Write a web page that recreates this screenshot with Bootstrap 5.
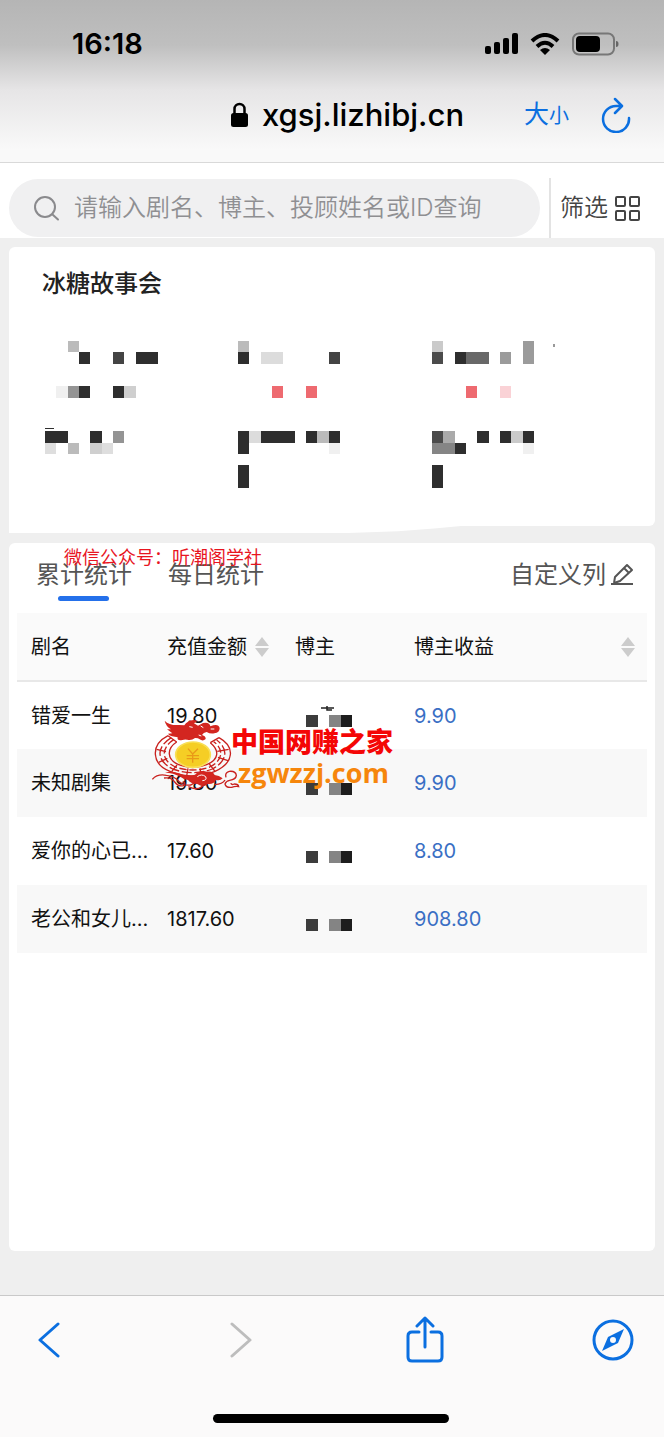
<!DOCTYPE html>
<html lang="zh-CN">
<head>
<meta charset="utf-8">
<meta name="viewport" content="width=device-width, initial-scale=1">
<title>冰糖故事会</title>
<link href="https://cdn.jsdelivr.net/npm/bootstrap@5.3.0/dist/css/bootstrap.min.css" rel="stylesheet">
<style>
  body { font-family: Inter, "Noto Sans CJK SC", sans-serif; background: #efefef; color: #111; }
  svg { display: block; flex: none; }
  button { background: none; border: 0; padding: 0; color: inherit; }
  .top-chrome { background: linear-gradient(#b5b5b5 0, #bfbfbf 45px, #e6e5e6 90px, #f9f9f9 150px); border-bottom: 1px solid #d9d9d9; color: #000; }
  .status-row { height: 88px; padding: 0 45px 0 72px; font-size: 29px; font-weight: 600; }
  .address-row { height: 74px; padding: 0 33px 20px 230px; }
  .address-text { font-size: 31px; line-height: 40px; font-weight: 500; color: #000; }
  .ios-blue { color: #0b6fe0; }
  .size-big { font-size: 25px; font-weight: 400; }
  .size-small { font-size: 20px; font-weight: 400; }
  .search-row { padding: 15px 24px 0 9px; gap: 9px; }
  .search-pill { background: #f0f0f1; height: 58px; padding: 0 24px; gap: 14px; color: #8a8a8d; }
  .search-pill input { border: 0; background: none; outline: 0; font-size: 24px; font-weight: 350; padding: 0; color: #333; }
  .search-pill input::placeholder { color: #8f8f92; opacity: 1; }
  .filter-btn { border-left: 2px solid #e3e3e3; height: 60px; padding-left: 9px; gap: 6px; font-size: 24px; font-weight: 350; color: #444; }
  .page-main { padding: 9px 9px 44px; gap: 17px; }
  .panel { background: #fff; border-radius: 6px; }
  .summary { height: 279px; padding: 19px 30px 0 36px; border-bottom-left-radius: 0; }
  .summary::after { content: ""; position: absolute; left: 0; top: 100%; width: 70%; height: 7px; background: #fff; clip-path: polygon(0 0, 100% 0, 94% 35%, 86% 75%, 75% 100%, 0 100%); }
  .summary h1 { font-size: 24px; line-height: 36px; font-weight: 500; margin: 0 -3px 39px; color: #222; }
  .tabs-row { height: 70px; padding: 0 21px 0 27px; font-size: 24px; font-weight: 350; color: #555; }
  .tab-btn { height: 64px; position: relative; line-height: 64px; }
  .tab-btn.active::after { content: ""; position: absolute; left: 22px; width: 51px; height: 5px; bottom: 6px; border-radius: 3px; background: #2470ea; }
  .notice { position: absolute; left: 55px; top: 1px; font-size: 18px; line-height: 27px; color: #e8151f; font-weight: 400; }
  .data-wrap { margin: 0 8px; }
  .data-grid { table-layout: fixed; width: 100%; font-size: 20px; }
  .data-grid th, .data-grid td { height: 68px; padding: 0 0 0 14px; font-weight: 400; white-space: nowrap; overflow: visible; }
  .data-grid th { background: #fafafa; border-bottom: 2px solid #e8e8e8; }
  .data-grid tbody tr:nth-child(even) { background: #f8f8f8; }
  .data-grid a { color: #3a6fc4; text-decoration: none; }
  .col-name { width: 136px; } .col-sum { width: 128px; } .col-host { width: 119px; }
  .data-grid td.host { padding: 11px 0 0 25px; }
  .stamp { position: absolute; left: 135px; top: 107px; pointer-events: none; }
  .stamp-text { margin-left: -9px; font-weight: 700; white-space: nowrap; }
  .stamp-name { font-size: 27px; line-height: 46px; color: #f40606; font-weight: 900; }
  .stamp-site { font-family: "Open Sans", "Noto Sans", sans-serif; font-size: 27px; line-height: 14px; color: #f6860c; padding-left: 7px; }
  .bottom-chrome { background: #fbfafa; border-top: 1px solid #c9c9c9; padding: 20px 27px 14px 25px; }
  .bottom-chrome nav button { width: 48px; height: 48px; }
  .home-bar { width: 236px; height: 9px; margin-top: 50px; background: #000; }
</style>
<script src="https://cdn.jsdelivr.net/npm/bootstrap@5.3.0/dist/js/bootstrap.bundle.min.js"></script>
</head>
<body class="d-flex flex-column min-vh-100">

<header class="top-chrome">
  <div class="status-row d-flex align-items-center justify-content-between">
    <span>16:18</span>
    <div class="d-flex align-items-center">
      <svg width="34" height="22" viewBox="0 0 34 22"><rect y="13" width="6" height="8" rx="2"/><rect x="9" y="9" width="6" height="12" rx="2"/><rect x="18" y="5" width="6" height="16" rx="2"/><rect x="27" width="6" height="21" rx="2"/></svg>
      <svg class="mx-2" width="36" height="22" viewBox="-3 0 36 22" fill="none" stroke="#000" stroke-width="4"><path d="M2 8Q15-4 28 8M7 13.500Q15 6 23 13.500"/><path d="M10 17Q15 13 20 17L15 22Z" fill="#000" stroke="none"/></svg>
      <svg width="48" height="24" viewBox="0 0 48 24"><rect x="2" y="1.500" width="41" height="21" rx="6" fill="none" stroke="#777" stroke-width="2"/><rect x="5" y="4" width="24" height="16" rx="4"/><path d="M45 9q2.500 0 2.500 3t-2.500 3z" fill="#666"/></svg>
    </div>
  </div>
  <div class="address-row d-flex align-items-center">
    <svg width="20" height="26" viewBox="0 0 20 26"><rect x="1" y="11" width="17" height="14" rx="2.500"/><path d="M4.500 12V7a5 5 0 0 1 10 0v5" fill="none" stroke="#000" stroke-width="2.500"/></svg>
    <span class="address-text ms-2 ps-1 me-auto">xgsj.lizhibj.cn</span>
    <button type="button" class="ios-blue d-flex align-items-baseline me-4" aria-label="文字大小"><span class="size-big">大</span><span class="size-small">小</span></button>
    <button type="button" class="ios-blue ms-2" aria-label="刷新"><svg width="30" height="36" viewBox="0 0 30 36" fill="none" stroke="currentColor" stroke-width="2.500" stroke-linecap="round" stroke-linejoin="round"><path d="M20 9H15A13 13 0 1 0 28 21M14 2l7 7-7 7"/></svg></button>
  </div>
</header>

<form class="search-row bg-white d-flex align-items-center" role="search">
  <label class="search-pill rounded-pill d-flex align-items-center flex-grow-1">
    <svg width="27" height="27" viewBox="0 0 27 27" fill="none" stroke="currentColor" stroke-width="2" stroke-linecap="round"><circle cx="12" cy="12" r="10"/><path d="m19.500 19.500 5.500 5"/></svg>
    <input class="flex-grow-1 w-100" type="search" placeholder="请输入剧名、博主、投顾姓名或ID查询" aria-label="查询">
  </label>
  <button type="button" class="filter-btn d-flex align-items-center">筛选
    <svg width="26" height="26" viewBox="0 0 26 26" fill="none" stroke="currentColor" stroke-width="2"><rect x="2" y="2" width="9" height="9" rx="1"/><rect x="16" y="2" width="9" height="9" rx="1"/><rect x="2" y="16" width="9" height="9" rx="1"/><rect x="16" y="16" width="9" height="9" rx="1"/></svg>
  </button>
</form>

<main class="page-main d-flex flex-column flex-grow-1">
  <section class="panel summary position-relative">
    <h1>冰糖故事会</h1>
    <div class="row g-0">
      <div class="col-4"><svg width="136" height="147" viewBox="0 0 12 13" preserveAspectRatio="none" shape-rendering="crispEdges" fill="#2e2e2e">
        <path d="M3 1h1v1H3zM8 1h2v1H8zM3 4h1v1H3zM6 4h1v1H6zM0 8h2v1H0zM4 8h1v1H4zM0 7.700h.8v.12H0z"/><path d="M6 1h1v1H6z" fill="#444"/><path d="M2 0h1v1H2zM2 9h1v1H2z" fill="#bbb"/><path d="M2 4h1v1H2zM6 8h1v1H6z" fill="#949494"/><path d="M7 4h1v1H7zM4 9h1v1H4z" fill="#cfcfcf"/><path d="M0 9h1v1H0zM5 9h1v1H5z" fill="#dedede"/><path d="M1 4h1v1H1z" fill="#f0f0f0"/></svg></div>
      <div class="col-4"><svg width="136" height="147" viewBox="0 0 12 13" preserveAspectRatio="none" shape-rendering="crispEdges" fill="#2e2e2e">
        <path d="M0 1h1v1H0zM0 8h1v2H0zM0 11h1v2H0zM2 8h3v1H2zM6 8h1v1H6zM8 8h1v1H8z"/><path d="M8 1h1v1H8z" fill="#444"/><path d="M0 0h1v1H0zM7 8h1v1H7z" fill="#bbb"/><path d="M2 1h2v1H2zM1 8h1v1H1z" fill="#dcdcdc"/><path d="M3 4h1v1H3zM6 4h1v1H6z" fill="#ee6a70"/><path d="M8 9h1v1H8z" fill="#f0f0f0"/></svg></div>
      <div class="col-4"><svg width="136" height="147" viewBox="0 0 12 13" preserveAspectRatio="none" shape-rendering="crispEdges" fill="#2e2e2e">
        <path d="M2 1h1v1H2zM4 8h1v1H4zM6 8h1v1H6zM8 8h1v1H8zM2 9h1v1H2zM0 11h1v2H0z"/><path d="M0 1h1v1H0zM0 8h1v1H0z" fill="#4b4b4b"/><path d="M3 1h2v1H3z" fill="#686868"/><path d="M0 9h2v1H0z" fill="#858585"/><path d="M8 0h1v2H8zM6 1h1v1H6z" fill="#9b9b9b"/><path d="M1 8h1v1H1z" fill="#aaa"/><path d="M0 0h1v1H0zM7 8h1v1H7z" fill="#cacaca"/><path d="M3 4h1v1H3z" fill="#ee6a70"/><path d="M6 4h1v1H6z" fill="#fad2d6"/><path d="M8 9h1v1H8z" fill="#f0f0f0"/><path d="M10.700.3h.15v.2h-.15z" fill="#999"/></svg></div>
    </div>
  </section>

  <section class="panel position-relative flex-grow-1">
    <div class="tabs-row d-flex align-items-start">
      <button type="button" class="tab-btn active me-4">累计统计</button>
      <button type="button" class="tab-btn ms-2 ps-1">每日统计</button>
      <button type="button" class="tab-btn ms-auto d-flex align-items-center gap-1">自定义列
        <svg width="24" height="24" viewBox="0 0 24 24" fill="none" stroke="currentColor" stroke-width="2" stroke-linejoin="round"><path d="M1 21h22M4 20l1-6L17 2l5 5L10 18l-6 2M14 5l5 5"/></svg></button>
    </div>
    <span class="notice">微信公众号：听潮阁学社</span>

    <div class="data-wrap position-relative">
      <table class="data-grid">
        <colgroup><col class="col-name"><col class="col-sum"><col class="col-host"><col></colgroup>
        <thead><tr>
          <th scope="col">剧名</th>
          <th scope="col"><div class="d-flex align-items-center gap-2">充值金额<svg width="14" height="20" viewBox="0 0 14 20" fill="#ccc"><path d="M0 9 7 0l7 9zM0 11h14l-7 9z"/></svg></div></th>
          <th scope="col">博主</th>
          <th scope="col"><div class="d-flex align-items-center justify-content-between pe-2 me-1">博主收益<svg width="14" height="20" viewBox="0 0 14 20" fill="#ccc"><path d="M0 9 7 0l7 9zM0 11h14l-7 9z"/></svg></div></th>
        </tr></thead>
        <tbody>
          <tr><td>错爱一生</td><td>19.80</td><td class="host"><svg width="46" height="12" viewBox="0 0 46 12" overflow="visible"><path d="M0 0h12v12H0z" fill="#3c3c3c"/><path d="M23 0h12v12H23z" fill="#848484"/><path d="M35 0h11v12H35z" fill="#1d1d1d"/><path d="M15-7h13M21-9v4h5" fill="none" stroke="#222" stroke-width="1.500"/></svg></td><td><a href="#">9.90</a></td></tr>
          <tr><td>未知剧集</td><td>19.80</td><td class="host"><svg width="46" height="12" viewBox="0 0 46 12"><path d="M0 0h12v12H0z" fill="#3c3c3c"/><path d="M23 0h12v12H23z" fill="#848484"/><path d="M35 0h11v12H35z" fill="#1d1d1d"/></svg></td><td><a href="#">9.90</a></td></tr>
          <tr><td>爱你的心已…</td><td>17.60</td><td class="host"><svg width="46" height="12" viewBox="0 0 46 12"><path d="M0 0h12v12H0z" fill="#3c3c3c"/><path d="M23 0h12v12H23z" fill="#848484"/><path d="M35 0h11v12H35z" fill="#1d1d1d"/></svg></td><td><a href="#">8.80</a></td></tr>
          <tr><td>老公和女儿…</td><td>1817.60</td><td class="host"><svg width="46" height="12" viewBox="0 0 46 12"><path d="M0 0h12v12H0z" fill="#3c3c3c"/><path d="M23 0h12v12H23z" fill="#848484"/><path d="M35 0h11v12H35z" fill="#1d1d1d"/></svg></td><td><a href="#">908.80</a></td></tr>
        </tbody>
      </table>

      <div class="stamp d-flex">
        <svg width="88" height="70" viewBox="36 92 264 210" fill="none" stroke="#c9211e">
          <path d="M84 139C30 167 35 225 90 246Q158 274 225 246C283 220 286 172 237 145" stroke-width="4"/>
          <path d="M110 158C80 177 79 211 116 226Q158 243 200 226C236 211 240 184 211 160" stroke-width="4"/>
          <path d="M94 145C47 174 49 214 98 239Q158 261 217 239C264 214 265 178 230 152" stroke-width="4" stroke-dasharray="30 8"/>
          <path d="M101 151C63 176 62 212 106 233Q158 251 209 233C250 213 252 180 221 157" stroke-width="4" stroke-dasharray="22 8"/>
          <path d="M84 139l26 19M50 180l28 7M56 219l26-12M95 247l16-20M140 260l4-23M184 260l-4-23M225 246l-17-22M264 214l-30-10M266 180l-34 6M237 145l-26 15" stroke-width="4"/>
          <ellipse cx="159" cy="196" rx="52" ry="38" fill="#f5ce25" stroke="#f8df55" stroke-width="5"/>
          <path d="m144 178 14 16 16-16M158 194v26M140 199h37M140 208h37" stroke="#e99a18" stroke-width="4"/>
          <g fill="#d32620" stroke="none">
            <path d="M74 94q14 15 43 13l16 1q8-14 28-16l12 2-11 8 12 7 15-8q20-4 22 10l9-3q16-4 19 8 0 15-16 16-13 2-23-4-10 2-14 9 12 3 11 12-8 8-18 1-6-5-14-4-10 8-23 5-10-1-15 1-17 3-14-8l-17-3q-10-3-12-8l13-1-16-12 12 0q-16-10-19-26Z"/>
            <path d="M75 250q20-7 42 2 24 12 48 4 15-16 36-9 17-3 23 10 13 1 24 10-7 8-20 5-7 14-25 12-14 12-31 0-19 0-28-12-13-2-22-9-22-13-47-13Z"/>
          </g>
          <path d="M148 112l10 2M182 110l8 5M212 119h11M176 137l8 3" stroke="#fff" stroke-width="3"/>
          <path d="M37 270q15-17 42-12 24 2 38 18 13 14 35 11l14-8M72 266q24-3 32 12 11 15 26 11 10-9-2-12M145 292q24 12 39 1l16-10M224 286q24-2 31-14M258 264q-4-14 10-18 19-2 21 12-1 12-20 15-11 2-14 11 3 12 20 10 11-4 21-2-1-8-13-8-10 4-10-3" stroke-width="4"/>
          <path d="M172 262q13-10 25 0 5 11-10 12" stroke="#fff" stroke-width="3"/>
        </svg>
        <div class="stamp-text"><div class="stamp-name">中国网赚之家</div><div class="stamp-site">zgwzzj.com</div></div>
      </div>
    </div>
  </section>
</main>

<footer class="bottom-chrome">
  <nav class="d-flex justify-content-between ios-blue">
    <button type="button" class="d-flex align-items-center justify-content-center" aria-label="后退"><svg width="22" height="36" viewBox="0 0 22 36" fill="none" stroke="currentColor" stroke-width="3" stroke-linecap="round" stroke-linejoin="round"><path d="M20 2 2 18l18 16"/></svg></button>
    <button type="button" class="d-flex align-items-center justify-content-center" aria-label="前进"><svg width="30" height="36" viewBox="0 0 30 36" fill="none" stroke="#bdbdbd" stroke-width="3" stroke-linecap="round" stroke-linejoin="round"><path d="m10 2 18 16-18 16"/></svg></button>
    <button type="button" class="d-flex align-items-center justify-content-center" aria-label="分享"><svg width="38" height="48" viewBox="0 0 38 48" fill="none" stroke="currentColor" stroke-width="3" stroke-linecap="round" stroke-linejoin="round"><path d="M13 16H6q-4 0-4 4v21q0 4 4 4h26q4 0 4-4V20q0-4-4-4h-7M19 31V2M11 10l8-8 8 8"/></svg></button>
    <button type="button" class="d-flex align-items-center justify-content-center" aria-label="浏览"><svg width="42" height="42" viewBox="0 0 42 42"><circle cx="21" cy="21" r="19" fill="none" stroke="currentColor" stroke-width="3"/><path fill="currentColor" fill-rule="evenodd" d="M32 10 26 24 10 32 16 18ZM21 18a3 3 0 1 0 0 6 3 3 0 0 0 0-6Z"/></svg></button>
  </nav>
  <div class="home-bar rounded-pill mx-auto"></div>
</footer>
</body>
</html>
